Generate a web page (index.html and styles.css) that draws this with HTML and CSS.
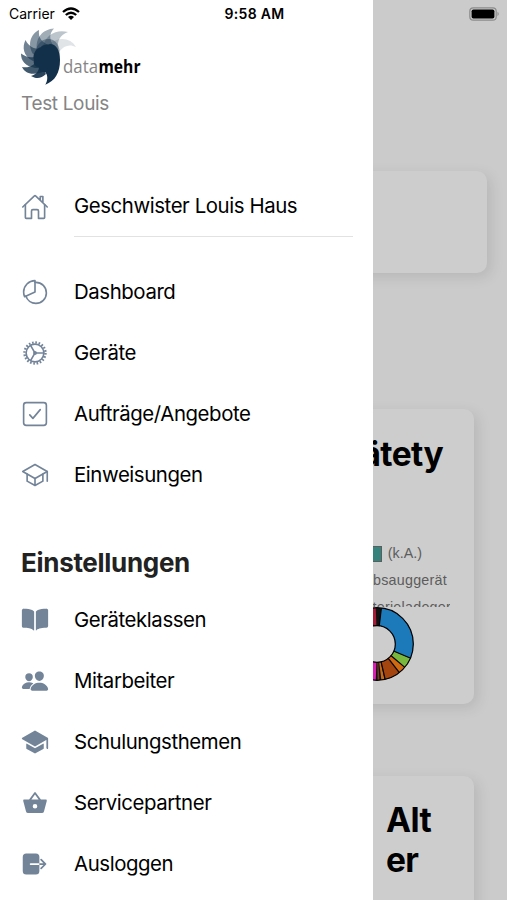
FILE: index.html
```html
<!DOCTYPE html>
<html lang="de">
<head>
    <meta charset="UTF-8">
    <meta name="viewport" content="width=device-width, initial-scale=1.0">
    <title>datamehr</title>
    <link rel="stylesheet" href="styles.css">
</head>
<body>
    <main class="content">
        <div class="card card-top"></div>
        <div class="card card-chart">
            <h1 class="chart-title">Gerätety</h1>
            <div class="legend">
                <div class="legend-row first"><span class="swatch"></span>(k.A.)</div>
                <div class="legend-row second">Absauggerät</div>
                <div class="legend-row third">Batterieladeger</div>
            </div>
            <svg class="donut" viewBox="-38 -38 76 76">
                <g class="slices" transform="rotate(-90)">
                    <circle r="27.3" pathLength="360" stroke="#111" stroke-dasharray="360 0"/>
                    <circle r="27.3" pathLength="360" stroke="#1c7abb" stroke-dasharray="106 254" stroke-dashoffset="-7"/>
                    <circle r="27.3" pathLength="360" stroke="#78b83c" stroke-dasharray="17 343" stroke-dashoffset="-113"/>
                    <circle r="27.3" pathLength="360" stroke="#cf6a12" stroke-dasharray="12 348" stroke-dashoffset="-130"/>
                    <circle r="27.3" pathLength="360" stroke="#a4450f" stroke-dasharray="25 335" stroke-dashoffset="-142"/>
                    <circle r="27.3" pathLength="360" stroke="#c26a1c" stroke-dasharray="5 355" stroke-dashoffset="-168"/>
                    <circle r="27.3" pathLength="360" stroke="#7c3a18" stroke-dasharray="3 357" stroke-dashoffset="-176"/>
                    <circle r="27.3" pathLength="360" stroke="#d81fb4" stroke-dasharray="14 346" stroke-dashoffset="-182"/>
                    <circle r="27.3" pathLength="360" stroke="#a31d38" stroke-dasharray="9 351" stroke-dashoffset="-349"/>
                </g>
                <g stroke="#000" stroke-width="1.2" fill="none">
                    <circle r="36.3"/>
                    <circle r="18.3"/>
                    <path d="M0-18V-36" transform="rotate(7)"/>
                    <path d="M0-18V-36" transform="rotate(113)"/>
                    <path d="M0-18V-36" transform="rotate(130)"/>
                    <path d="M0-18V-36" transform="rotate(142)"/>
                    <path d="M0-18V-36" transform="rotate(167)"/>
                </g>
            </svg>
        </div>
        <div class="card card-age">
            <h1>Alt<br>er</h1>
        </div>
    </main>

    <nav class="menu">
        <header class="menu-header">
            <svg class="logo" viewBox="0 0 126 60">
                <g fill="#123049">
                    <path opacity=".13" d="M28 18C38 10 50 12 55 21C49 18 43 19 38 26Z"/>
                    <path opacity=".28" d="M22 20C25 8 36 3 47 6C39 9 36 14 37 24Z"/>
                    <path opacity=".4" d="M16 24C14 12 22 3 33 2.5C28 8 28 13 33 21Z"/>
                    <path opacity=".5" d="M12 28C6 18 10 8 18 4C17 12 21 17 30 20L24 34Z"/>
                    <path opacity=".6" d="M12 35C2 30 1 21 4.5 14C8 21 14 24 24 23L24 38Z"/>
                    <path opacity=".7" d="M14 42C4 40 0 35 0 27.5C6 32 12 33 20 28L24 42Z"/>
                    <path opacity=".8" d="M19 47C9 49 4 47 1 41C8 42 13 40 17 33L26 44Z"/>
                    <path opacity=".9" d="M25 48C20 53 15 53 10 50C16 48 18 45 19 38Z"/>
                    <path opacity=".4" d="M14 30C14 20 20 12 29 13C38 15 40 24 38 34L22 42Z"/>
                    <path d="M13 34C11 29 15 22 20 21C22 18 27 19 29 18C35 18 39 24 39 34C39 47 34 55 24.3 58.7C27 54 27 49 24 46C20 46 17 45 18 41C14 41 12 38 13 34Z"/>
                </g>
                <text x="42" y="46.5" textLength="35" lengthAdjust="spacingAndGlyphs" class="logo-light">data</text>
                <text x="77.5" y="46.5" textLength="42" lengthAdjust="spacingAndGlyphs" class="logo-bold">mehr</text>
            </svg>
            <p class="user">Test Louis</p>
        </header>

        <ul class="list">
            <li>
                <svg class="icon line" viewBox="0 0 512 512"><path d="M80 212v236a16 16 0 0016 16h96V328a24 24 0 0124-24h80a24 24 0 0124 24v136h96a16 16 0 0016-16V212"/><path d="M480 256L266.89 52c-5-5.28-16.69-5.34-21.78 0L32 256M400 179V64h-48v69"/></svg>
                <span class="label underlined">Geschwister Louis Haus</span>
            </li>
        </ul>

        <ul class="list main-list">
            <li>
                <svg class="icon line" viewBox="0 0 512 512"><path d="M256.05 80.65Q263.94 80 272 80c106 0 192 86 192 192s-86 192-192 192A192.09 192.09 0 0189.12 330.65"/><path d="M256 48C141.12 48 48 141.12 48 256a207.29 207.29 0 0018.09 85L256 256z"/></svg>
                <span class="label">Dashboard</span>
            </li>
            <li>
                <svg class="icon line" viewBox="0 0 512 512">
                    <circle cx="256" cy="256" r="162"/>
                    <circle class="teeth" cx="256" cy="256" r="192" pathLength="360"/>
                    <circle cx="256" cy="256" r="20"/>
                    <path d="M276 256h142M246 239L175 116M246 273l-71 123"/>
                </svg>
                <span class="label">Geräte</span>
            </li>
            <li>
                <svg class="icon line" viewBox="0 0 512 512"><path d="M352 176L217.6 336 160 272"/><rect x="48" y="48" width="416" height="416" rx="48"/></svg>
                <span class="label">Aufträge/Angebote</span>
            </li>
            <li>
                <svg class="icon line" viewBox="0 0 512 512"><path d="M32 192L256 64l224 128-224 128L32 192z"/><path d="M112 240v128l144 80 144-80V240M480 368V192M256 320v128"/></svg>
                <span class="label">Einweisungen</span>
            </li>
        </ul>

        <h2 class="menu-title">Einstellungen</h2>

        <ul class="list">
            <li>
                <svg class="icon" viewBox="0 0 512 512"><path d="M202.24 74C166.11 56.75 115.61 48.3 48 48a31.36 31.36 0 00-17.92 5.33A32 32 0 0016 79.9V366c0 19.34 13.76 33.93 32 33.93 71.07 0 142.36 6.64 185.06 47a4.11 4.11 0 006.94-3V106.82a15.89 15.89 0 00-5.46-12A143 143 0 00202.24 74zM481.92 53.3A31.33 31.33 0 00464 48c-67.61.3-118.11 8.71-154.24 26a143.31 143.31 0 00-32.31 20.78 15.93 15.93 0 00-5.45 12v337.13a3.93 3.93 0 006.68 2.81c25.67-25.5 70.72-46.82 185.36-46.81a32 32 0 0032-32v-288a32 32 0 00-14.12-26.61z"/></svg>
                <span class="label">Geräteklassen</span>
            </li>
            <li>
                <svg class="icon" viewBox="0 0 512 512"><path d="M336 256c-20.56 0-40.56-9.18-56.32-25.84-15.13-16.25-24.37-37.92-26-61-1.74-24.62 5.77-47.26 21.14-63.76S312 80 336 80c23.83 0 45.38 9.06 60.7 25.52 15.47 16.62 23 39.22 21.26 63.63-1.67 23.11-10.9 44.77-26 61C376.22 246.82 356.22 256 336 256zM467.83 432H204.18a27.71 27.71 0 01-22-10.67 30.22 30.22 0 01-5.26-25.79c8.42-33.81 29.28-61.85 60.32-81.08C264.79 297.4 299.86 288 336 288c36.85 0 71 9 98.71 26.05 31.11 19.13 52 47.33 60.38 81.55a30.27 30.27 0 01-5.32 25.78A27.68 27.68 0 01467.83 432zM147 260c-35.19 0-66.13-32.72-69-72.93-1.42-20.6 5-39.65 18-53.62 12.86-13.83 31-21.45 51-21.45s38 7.66 50.93 21.57c13.1 14.08 19.5 33.09 18 53.52-2.87 40.2-33.8 72.91-68.93 72.91zM212.66 291.45c-17.59-8.6-40.42-12.9-65.65-12.9-29.46 0-58.07 7.68-80.57 21.62-25.51 15.83-42.67 38.88-49.6 66.71a27.39 27.39 0 004.79 23.36A25.32 25.32 0 0041.72 400h111a8 8 0 007.87-6.57c.11-.63.25-1.26.41-1.88 8.48-34.06 28.35-62.84 57.71-83.82a8 8 0 00-.63-13.39c-1.57-.92-3.37-1.89-5.42-2.89z"/></svg>
                <span class="label">Mitarbeiter</span>
            </li>
            <li>
                <svg class="icon" viewBox="0 0 512 512"><path d="M256 368a16 16 0 01-7.94-2.11L108 285.84a8 8 0 00-12 6.94V368a16 16 0 008.23 14l144 80a16 16 0 0015.54 0l144-80a16 16 0 008.23-14v-75.22a8 8 0 00-12-6.94l-140.06 80.05A16 16 0 01256 368z"/><path d="M495.92 190.5v-.11a16 16 0 00-8-12.28l-224-128a16 16 0 00-15.88 0l-224 128a16 16 0 000 27.78l224 128a16 16 0 0015.88 0L461 221.28a2 2 0 013 1.73v144.53c0 8.61 6.62 16 15.23 16.43A16 16 0 00496 368V192a14.76 14.76 0 00-.08-1.5z"/></svg>
                <span class="label">Schulungsthemen</span>
            </li>
            <li>
                <svg class="icon" viewBox="0 0 512 512"><path fill-rule="evenodd" d="M60 192h88l92-125a20 20 0 0132 0l92 125h88a20 20 0 0119 26l-51 192a40 40 0 01-38 30H130a40 40 0 01-38-30L41 218a20 20 0 0119-26zM190 192h132l-66-92zM256 272a42 42 0 100 84 42 42 0 000-84z"/></svg>
                <span class="label">Servicepartner</span>
            </li>
            <li>
                <svg class="icon" viewBox="0 0 512 512"><path d="M160 256a16 16 0 0116-16h160V128a64 64 0 00-64-64H96a64 64 0 00-64 64v256a64 64 0 0064 64h176a64 64 0 0064-64V272H176a16 16 0 01-16-16zM459.31 244.69l-80-80a16 16 0 00-22.62 22.62L409.37 240H336v32h73.37l-52.68 52.69a16 16 0 0022.62 22.62l80-80a16 16 0 000-22.62z"/></svg>
                <span class="label">Ausloggen</span>
            </li>
        </ul>
    </nav>

    <div class="status-bar">
        <span class="carrier">Carrier
            <svg class="wifi" viewBox="0 0 18 13"><g fill="none" stroke="#000" stroke-width="2.3"><path d="M1 5Q9-2 17 5M3.8 8Q9 3.4 14.2 8"/></g><path d="M6 10Q9 7.4 12 10L9 13Z"/></svg>
        </span>
        <span class="time">9:58 AM</span>
        <span class="power">
            <svg class="battery" viewBox="0 0 31 14"><rect x=".8" y=".8" width="26.4" height="12.4" rx="3.5" fill="none" stroke="#8c8c8c" stroke-width="1.2"/><rect x="2.6" y="2.5" width="22.8" height="9" rx="1.8"/><path d="M28.5 4.8Q31 7 28.5 9.2Z" fill="#8c8c8c"/></svg>
        </span>
    </div>
</body>
</html>
```

FILE: styles.css
```css
* {
    box-sizing: border-box;
}

body {
    position: relative;
    width: 507px;
    height: 900px;
    margin: 0;
    overflow: hidden;
    font-family: Inter, "Liberation Sans", sans-serif;
    background-color: #cbcbcb;
    color: #000;
}

h1, h2, p, ul {
    margin: 0;
    padding: 0;
}

h1 {
    font-size: 33.5px;
    line-height: 40px;
    font-weight: 700;
    letter-spacing: -0.6px;
}

/* page behind the drawer */
.content {
    display: flex;
    flex-direction: column;
    height: 900px;
    padding: 171px 33px 0;
    overflow: hidden;
}

.card {
    flex: none;
    border-radius: 10px;
    background-color: #cdcdcd;
    box-shadow: 4px 4px 14px rgba(0, 0, 0, 0.1);
}

.card-top {
    height: 102px;
    margin: 0 -13px 136px;
}

.card-chart {
    display: flex;
    flex-direction: column;
    height: 295px;
    margin-bottom: 72px;
    padding: 25px 24px 0;
}

.chart-title {
    width: 386px;
    text-align: right;
}

.legend {
    height: 67px;
    margin-top: 66px;
    overflow: hidden;
    font-family: "Liberation Sans", Arial, sans-serif;
    font-size: 14.3px;
    line-height: 27px;
    color: #5c5c5c;
}

.legend-row {
    display: flex;
    justify-content: flex-end;
    align-items: center;
}

.legend-row.first {
    width: 365px;
}

.legend-row.second {
    width: 390px;
    letter-spacing: 0.25px;
}

.legend-row.third {
    width: 394px;
    letter-spacing: 0.25px;
}

.swatch {
    width: 41px;
    height: 16px;
    margin-right: 6px;
    border: 1px solid #5c5c5c;
    background-color: #36827c;
}

.donut {
    width: 76px;
    height: 76px;
    margin: -1px 0 0 282px;
}

.slices {
    fill: none;
    stroke-width: 18;
}

.card-age {
    height: 295px;
    padding: 24px 0 0 353px;
}

/* drawer */
.menu {
    position: absolute;
    top: 0;
    left: 0;
    width: 373px;
    height: 900px;
    background-color: #fff;
}

.menu-header {
    height: 176px;
    padding: 26px 21px 0;
}

.logo {
    display: block;
    width: 126px;
    height: 60px;
}

.logo-light, .logo-bold {
    font-family: "Open Sans", "Noto Sans", sans-serif;
    font-size: 18px;
}

.logo-light {
    fill: #858585;
}

.logo-bold {
    font-weight: 700;
}

.user {
    margin-top: 6px;
    font-size: 19px;
    line-height: 24px;
    letter-spacing: -0.35px;
    color: #858585;
}

.list {
    list-style: none;
}

.list li {
    display: flex;
    align-items: center;
    height: 61px;
    padding: 0 20px 0 21px;
}

.main-list {
    margin-top: 24px;
}

.icon {
    flex: none;
    width: 28px;
    height: 28px;
    margin-right: 25px;
    fill: #738499;
}

.icon.line {
    fill: none;
    stroke: #738499;
    stroke-width: 30;
    stroke-linecap: round;
    stroke-linejoin: round;
}

.icon .teeth {
    stroke-width: 44;
    stroke-linecap: butt;
    stroke-dasharray: 9 9;
}

.label {
    display: flex;
    flex: 1;
    align-items: center;
    height: 61px;
    font-size: 20.4px;
    letter-spacing: -0.42px;
    white-space: nowrap;
}

.underlined {
    padding-bottom: 1px;
    border-bottom: 1px solid #e2e2e2;
}

.menu-title {
    height: 84px;
    padding: 43px 21px 0;
    font-size: 26px;
    line-height: 30px;
    letter-spacing: -0.3px;
    color: #222;
}

/* device status bar */
.status-bar {
    position: absolute;
    top: 0;
    left: 0;
    display: flex;
    align-items: center;
    width: 507px;
    height: 27px;
    padding: 0 7px 0 9px;
    font-size: 14px;
}

.carrier, .power {
    display: flex;
    flex: 1;
    align-items: center;
}

.power {
    justify-content: flex-end;
}

.wifi {
    width: 18px;
    height: 13px;
    margin-left: 7px;
}

.time {
    font-weight: 600;
    letter-spacing: 0.3px;
}

.battery {
    width: 31px;
    height: 14px;
}
```
